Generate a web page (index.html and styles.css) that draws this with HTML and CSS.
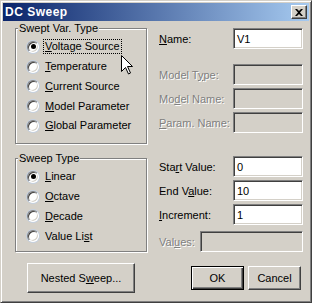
FILE: index.html
```html
<!DOCTYPE html>
<html lang="en">
<head>
  <meta charset="UTF-8" />
  <title>DC Sweep</title>
  <link rel="stylesheet" href="styles.css">
</head>
<body>
  <div class="window">
    <div class="titlebar">
      <span class="title">DC Sweep</span>
      <span class="close">
        <svg width="8" height="7" viewBox="0 0 8 7">
          <path d="M0 0h2l2 2 2-2h2L5 3.5 8 7H6L4 5 2 7H0l3-3.5z" fill="#000"/>
        </svg>
      </span>
    </div>

    <div class="content">
      <div class="left">
        <div class="group swept">
          <div class="legend">Swept Var. Type</div>
          <div class="opt"><span class="radio on"></span><span class="txt focus"><u>V</u>oltage Source</span></div>
          <div class="opt"><span class="radio"></span><span class="txt"><u>T</u>emperature</span></div>
          <div class="opt"><span class="radio"></span><span class="txt"><u>C</u>urrent Source</span></div>
          <div class="opt"><span class="radio"></span><span class="txt"><u>M</u>odel Parameter</span></div>
          <div class="opt"><span class="radio"></span><span class="txt"><u>G</u>lobal Parameter</span></div>
        </div>

        <div class="group sweep">
          <div class="legend">Sweep Type</div>
          <div class="opt"><span class="radio on"></span><span class="txt"><u>L</u>inear</span></div>
          <div class="opt"><span class="radio"></span><span class="txt"><u>O</u>ctave</span></div>
          <div class="opt"><span class="radio"></span><span class="txt"><u>D</u>ecade</span></div>
          <div class="opt"><span class="radio"></span><span class="txt">Value Li<u>s</u>t</span></div>
        </div>

        <button class="btn nested">Nested S<u>w</u>eep...</button>
      </div>

      <div class="right">
        <div class="row"><label><u>N</u>ame:</label><div class="input">V1</div></div>

        <div class="row gap-big"><label class="dis">Model T<u>y</u>pe:</label><div class="input off"></div></div>
        <div class="row"><label class="dis">Mo<u>d</u>el Name:</label><div class="input off"></div></div>
        <div class="row"><label class="dis"><u>P</u>aram. Name:</label><div class="input off"></div></div>

        <div class="row gap-start"><label>Sta<u>r</u>t Value:</label><div class="input">0</div></div>
        <div class="row"><label>End V<u>a</u>lue:</label><div class="input">10</div></div>
        <div class="row"><label><u>I</u>ncrement:</label><div class="input">1</div></div>
        <div class="row values"><label class="dis">Val<u>u</u>es:</label><div class="input off"></div></div>

        <div class="buttons">
          <button class="btn default">OK</button>
          <button class="btn">Cancel</button>
        </div>
      </div>
    </div>

    <svg class="cursor" width="13" height="20" viewBox="0 0 13 20">
      <path d="M0.5 0.5V16.5L4.5 12.5L7.5 19L9.5 18L6.5 11.5H11.5Z" fill="#fff" stroke="#000"/>
    </svg>
  </div>
</body>
</html>
```

FILE: styles.css
```css
* {
  box-sizing: border-box;
  margin: 0;
  padding: 0;
}

body {
  font-family: "Liberation Sans", Arial, sans-serif;
  font-size: 11px;
  color: #000;
  background: #d4d0c8;
}

u {
  text-underline-offset: 1px;
}

.window {
  position: relative;
  width: 312px;
  height: 303px;
  background: #d4d0c8;
  border: 1px solid;
  border-color: #d4d0c8 #404040 #404040 #d4d0c8;
  box-shadow: inset 1px 1px #fff, inset -1px -1px #808080;
  padding: 2px;
}

.titlebar {
  height: 18px;
  display: flex;
  align-items: center;
  justify-content: space-between;
  padding: 0 2px;
  background: linear-gradient(90deg, #0a246a, #a6caf0);
}

.title {
  color: #fff;
  font-weight: bold;
  font-size: 12px;
  letter-spacing: 0.5px;
}

.close {
  width: 16px;
  height: 14px;
  display: flex;
  align-items: center;
  justify-content: center;
  background: #d4d0c8;
  border: 1px solid;
  border-color: #fff #404040 #404040 #fff;
  box-shadow: inset -1px -1px #808080;
}

.content {
  display: flex;
  padding: 7px 0 0 12px;
}

.left {
  width: 132px;
}

.right {
  margin-left: 12px;
  width: 144px;
}

/* group boxes */
.group {
  border: 1px solid #808080;
  box-shadow: inset 1px 1px #fff, 1px 1px #fff;
  padding-left: 11px;
}

.group.swept {
  height: 116px;
}

.group.sweep {
  height: 94px;
  margin-top: 14px;
}

.legend {
  width: fit-content;
  height: 13px;
  line-height: 13px;
  margin: -7px 0 2px -9px;
  padding: 0 1px;
  background: #d4d0c8;
}

.opt {
  display: flex;
  align-items: center;
  height: 19.75px;
}

.radio {
  position: relative;
  width: 12px;
  height: 12px;
  margin-right: 5px;
  border-radius: 50%;
  border: 1px solid;
  border-color: #808080 #fff #fff #808080;
  box-shadow: inset 1px 1px #404040, inset -1px -1px #d4d0c8, 0 0 0 1px #c4d0e0;
  background: #fff;
}

.radio.on::after {
  content: "";
  position: absolute;
  left: 2.5px;
  top: 2.5px;
  width: 5px;
  height: 5px;
  border-radius: 50%;
  background: #000;
}

.txt {
  padding: 0 1px;
  line-height: 13px;
}

.txt.focus {
  outline: 1px dotted #000;
}

/* right side fields */
.row {
  display: flex;
  align-items: center;
  height: 21px;
  margin-top: 3px;
}

.row:first-child {
  margin-top: 0;
}

.row.gap-big {
  margin-top: 15px;
}

.row.gap-start {
  margin-top: 23px;
}

.row.values {
  margin-top: 6px;
}

.row label {
  width: 74px;
}

.row.values label {
  width: 41px;
}

.dis {
  color: #808080;
  text-shadow: 1px 1px 0 #fff;
}

.input {
  width: 70px;
  height: 21px;
  display: flex;
  align-items: center;
  padding-left: 3px;
  background: #fff;
  border: 1px solid;
  border-color: #808080 #fff #fff #808080;
  box-shadow: inset 1px 1px #404040, inset -1px -1px #d4d0c8;
}

.row.values .input {
  width: 103px;
}

.input.off {
  background: #d4d0c8;
}

/* buttons */
.btn {
  font: inherit;
  color: #000;
  background: #d4d0c8;
  border: 1px solid;
  border-color: #fff #404040 #404040 #fff;
  box-shadow: inset -1px -1px #808080, inset 1px 1px #d4d0c8;
}

.btn.nested {
  width: 108px;
  height: 30px;
  margin: 11px 0 0 12px;
}

.buttons {
  display: flex;
  gap: 4px;
  margin-top: 14px;
  padding-left: 32px;
}

.buttons .btn {
  width: 53px;
  height: 24px;
}

.btn.default {
  border-color: #000;
  box-shadow: inset 1px 1px #fff, inset -1px -1px #404040, inset -2px -2px #808080;
}

.cursor {
  position: absolute;
  left: 120px;
  top: 54px;
}
```
